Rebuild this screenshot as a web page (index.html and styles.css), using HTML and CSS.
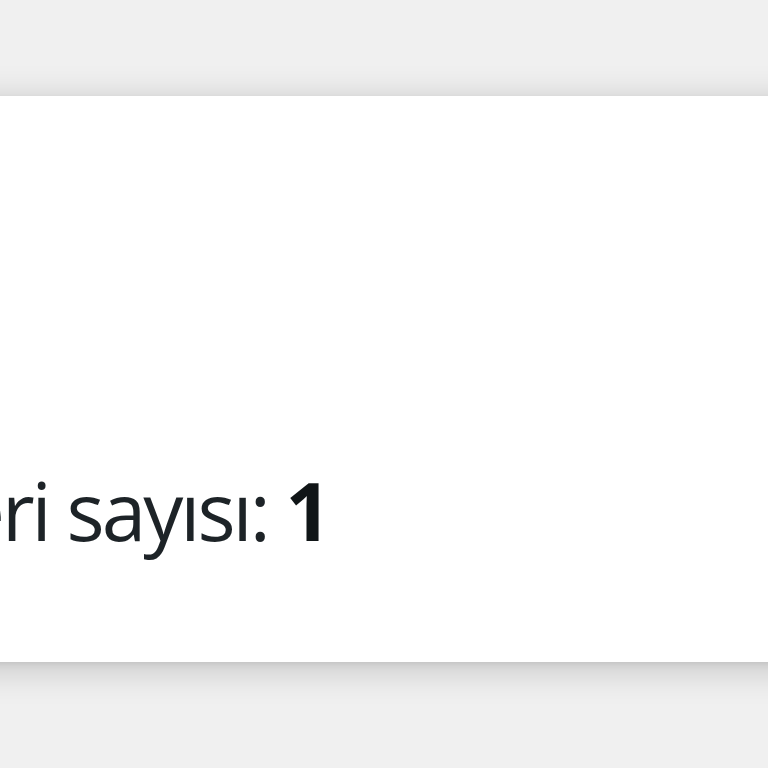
FILE: index.html
```html
<!DOCTYPE html>
<html lang="tr">

<head>
    <title>Pano</title>
    <meta charset="utf-8">
    <meta name="viewport" content="width=device-width, initial-scale=1">
    <link rel="stylesheet" href="styles.css">
</head>

<body>
    <div class="page">
        <div class="stat_card">
            <p class="stat_card-line">eri sayısı: <strong>1</strong></p>
        </div>
    </div>
</body>

</html>
```

FILE: styles.css
```css
body {
    font-family: "Open Sans", "Noto Sans", sans-serif;
    background: #f0f0f0;
    margin: 0;
}

.page {
    height: 768px;
    overflow: hidden;
    padding-top: 96px;
    box-sizing: border-box;
}

.stat_card {
    margin: 0 -40px;
    height: 566px;
    box-sizing: border-box;
    padding: 374px 0 0 40px;
    background: #fff;
    box-shadow: 0 6px 34px rgba(0, 0, 0, 0.2), 0 2px 6px rgba(0, 0, 0, 0.07);
}

.stat_card-line {
    margin: 0 0 0 -40px;
    font-size: 80px;
    line-height: 1;
    letter-spacing: -3px;
    color: #1d2327;
    white-space: nowrap;
}

.stat_card-line strong {
    font-weight: 700;
    color: #101517;
}
```
